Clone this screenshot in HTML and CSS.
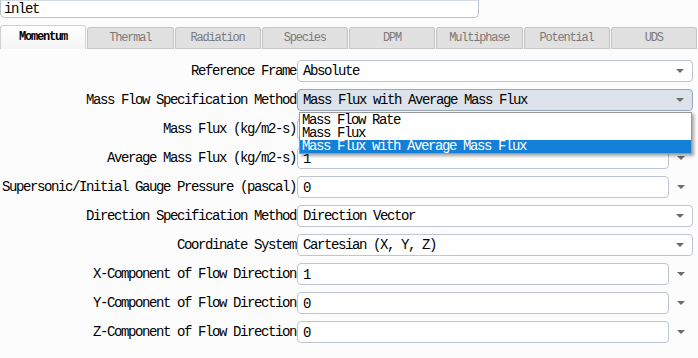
FILE: index.html
```html
<!DOCTYPE html>
<html lang="en">
<head>
  <meta charset="UTF-8" />
  <title>Boundary Conditions - inlet</title>
  <link rel="stylesheet" href="styles.css">
</head>
<body>
  <div class="name-bar">
    <div class="name-field">inlet</div>
  </div>

  <div class="tabs">
    <div class="tab active">Momentum</div>
    <div class="tab">Thermal</div>
    <div class="tab">Radiation</div>
    <div class="tab">Species</div>
    <div class="tab">DPM</div>
    <div class="tab">Multiphase</div>
    <div class="tab">Potential</div>
    <div class="tab">UDS</div>
  </div>

  <div class="form">
    <div class="row">
      <div class="label">Reference Frame</div>
      <div class="select">Absolute<span class="arrow"></span></div>
    </div>

    <div class="row">
      <div class="label">Mass Flow Specification Method</div>
      <div class="select focused">Mass Flux with Average Mass Flux<span class="arrow"></span></div>
      <div class="dropdown">
        <div class="option">Mass Flow Rate</div>
        <div class="option">Mass Flux</div>
        <div class="option selected">Mass Flux with Average Mass Flux</div>
      </div>
    </div>

    <!-- covered by the open dropdown -->
    <div class="row">
      <div class="label">Mass Flux (kg/m2-s)</div>
      <div class="input"></div>
      <span class="arrow"></span>
    </div>

    <div class="row">
      <div class="label">Average Mass Flux (kg/m2-s)</div>
      <div class="input low">1</div>
      <span class="arrow"></span>
    </div>

    <div class="row">
      <div class="label">Supersonic/Initial Gauge Pressure (pascal)</div>
      <div class="input">0</div>
      <span class="arrow"></span>
    </div>

    <div class="row">
      <div class="label">Direction Specification Method</div>
      <div class="select">Direction Vector<span class="arrow"></span></div>
    </div>

    <div class="row">
      <div class="label">Coordinate System</div>
      <div class="select">Cartesian (X, Y, Z)<span class="arrow"></span></div>
    </div>

    <div class="row">
      <div class="label">X-Component of Flow Direction</div>
      <div class="input">1</div>
      <span class="arrow"></span>
    </div>

    <div class="row">
      <div class="label">Y-Component of Flow Direction</div>
      <div class="input">0</div>
      <span class="arrow"></span>
    </div>

    <div class="row">
      <div class="label">Z-Component of Flow Direction</div>
      <div class="input">0</div>
      <span class="arrow"></span>
    </div>
  </div>
</body>
</html>
```

FILE: styles.css
```css
body {
  font-family: "Liberation Mono", "DejaVu Sans Mono", monospace;
  font-size: 14px;
  letter-spacing: -1.4px;
  background-color: #fcfcfc;
  color: #000;
  margin: 0;
  padding: 0;
}
.name-bar {
  height: 26px;
}
.name-field {
  width: 474px;
  height: 16px;
  line-height: 16px;
  padding-left: 3px;
  border: 1px solid #b9c3cf;
  border-top-color: #d4dae2;
  border-radius: 0 0 5px 5px;
  background-color: #fff;
}
.tabs {
  display: flex;
  height: 23px;
  align-items: flex-end;
}
.tab {
  width: 85px;
  height: 20px;
  line-height: 20px;
  margin-right: 1px;
  text-align: center;
  font-size: 12px;
  letter-spacing: -1.2px;
  color: #7a7a7a;
  background-color: #e1e1e1;
  border: 1px solid #c4c4c4;
  border-bottom: 1px solid #c9c9c9;
  border-radius: 3px 3px 0 0;
}
.tab.active {
  height: 23px;
  line-height: 22px;
  color: #000;
  font-weight: bold;
  background: linear-gradient(#ffffff, #f4f4f4);
  border-color: #d0d0d0;
  border-bottom: none;
}
.form {
  padding-top: 11px;
}
.row {
  position: relative;
  display: grid;
  grid-template-columns: 297px 372px 24px;
  align-items: center;
  height: 22px;
  margin-bottom: 7px;
}
.label {
  text-align: right;
  padding-right: 1px;
  white-space: nowrap;
}
.select, .input {
  position: relative;
  height: 20px;
  line-height: 20px;
  padding-left: 5px;
  border: 1px solid #bcc5d1;
  border-radius: 4px;
  background-color: #fff;
  white-space: nowrap;
}
.input {
  height: 19px;
  padding-top: 1px;
}
.input.low {
  height: 17px;
  line-height: 17px;
  padding-top: 3px;
}
.select {
  grid-column: 2 / 4;
}
.select.focused {
  background-color: #dde3ea;
  border-color: #97a6b8;
}
.arrow {
  justify-self: center;
  width: 0;
  height: 0;
  border-left: 4px solid transparent;
  border-right: 4px solid transparent;
  border-top: 4px solid #6b6b6b;
}
.select .arrow {
  position: absolute;
  right: 8px;
  top: 8px;
}
.dropdown {
  position: absolute;
  left: 299px;
  top: 23px;
  width: 391px;
  padding: 1px 0 0;
  background-color: #fff;
  border: 1px solid #9a9a9a;
  box-shadow: 2px 2px 3px rgba(0, 0, 0, 0.35);
  z-index: 2;
}
.option {
  height: 13px;
  line-height: 13px;
  padding-left: 2px;
  white-space: nowrap;
}
.option.selected {
  background-color: #1580d8;
  color: #fff;
}
```
